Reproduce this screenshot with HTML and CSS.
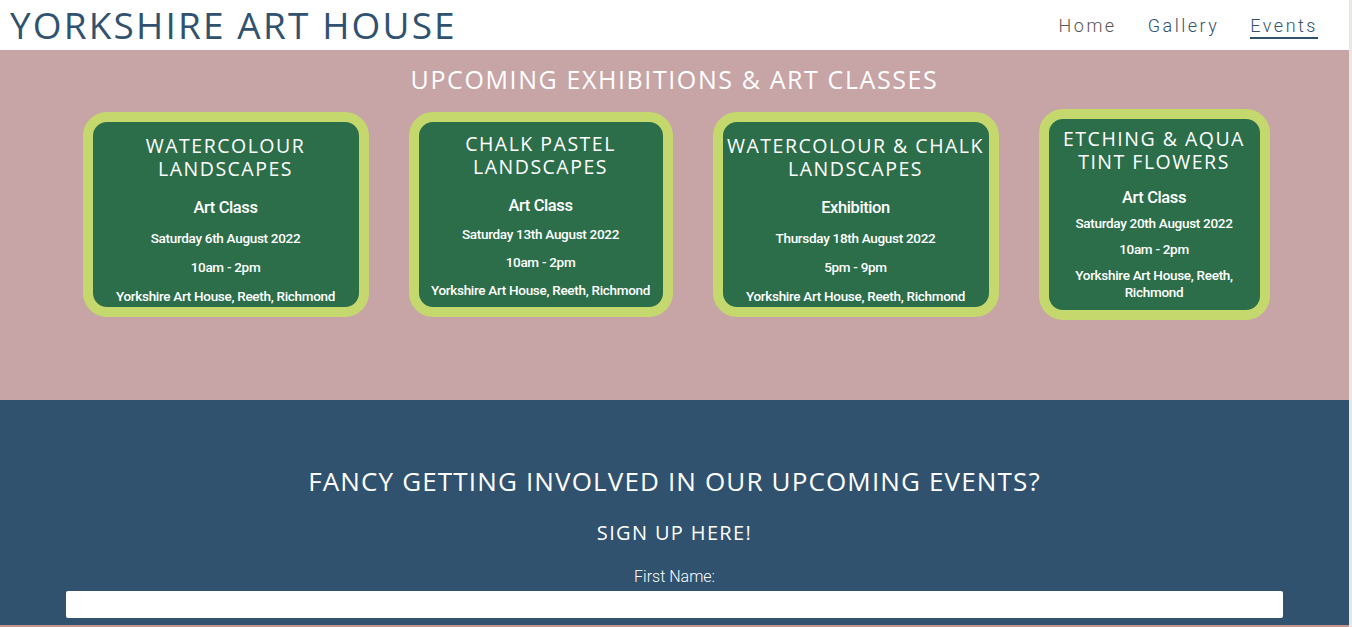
FILE: index.html
```html
<!DOCTYPE html>
<html lang="en">
<head>
<meta charset="utf-8">
<title>Events | Yorkshire Art House</title>
<link rel="stylesheet" href="styles.css">
</head>
<body>
<div class="page">
  <header class="site-header">
    <h1 class="logo">YORKSHIRE ART HOUSE</h1>
    <nav class="nav">
      <a class="nav-link nav-home" href="#">Home</a>
      <a class="nav-link" href="#">Gallery</a>
      <a class="nav-link active" href="#">Events</a>
    </nav>
  </header>

  <section class="events">
    <h2 class="events-title">UPCOMING EXHIBITIONS &amp; ART CLASSES</h2>
    <div class="cards">
      <article class="card card-wide">
        <h3 class="card-title">WATERCOLOUR<br>LANDSCAPES</h3>
        <p class="card-type">Art Class</p>
        <p>Saturday 6th August 2022</p>
        <p>10am - 2pm</p>
        <p>Yorkshire Art House, Reeth, Richmond</p>
      </article>
      <article class="card card-mid">
        <h3 class="card-title">CHALK PASTEL<br>LANDSCAPES</h3>
        <p class="card-type">Art Class</p>
        <p>Saturday 13th August 2022</p>
        <p>10am - 2pm</p>
        <p>Yorkshire Art House, Reeth, Richmond</p>
      </article>
      <article class="card card-wide">
        <h3 class="card-title">WATERCOLOUR &amp; CHALK<br>LANDSCAPES</h3>
        <p class="card-type">Exhibition</p>
        <p>Thursday 18th August 2022</p>
        <p>5pm - 9pm</p>
        <p>Yorkshire Art House, Reeth, Richmond</p>
      </article>
      <article class="card card-narrow">
        <h3 class="card-title">ETCHING &amp; AQUA<br>TINT FLOWERS</h3>
        <p class="card-type">Art Class</p>
        <p>Saturday 20th August 2022</p>
        <p>10am - 2pm</p>
        <p>Yorkshire Art House, Reeth, Richmond</p>
      </article>
    </div>
  </section>

  <section class="signup">
    <h2 class="signup-title">FANCY GETTING INVOLVED IN OUR UPCOMING EVENTS?</h2>
    <h3 class="signup-sub">SIGN UP HERE!</h3>
    <form class="signup-form">
      <label class="field-label" for="fname">First Name:</label>
      <input class="field-input" id="fname" type="text">
    </form>
  </section>
  <div class="next-strip"></div>
</div>
</body>
</html>
```
FILE: styles.css
```css
html {
  background: #e9e6e6;
}

body {
  margin: 0;
  font-family: Roboto, "Liberation Sans", sans-serif;
  overflow: hidden;
}

.page {
  margin-right: 3px;
  background: #ffffff;
}

/* Header */
.site-header {
  height: 50px;
  display: flex;
  align-items: center;
  justify-content: space-between;
  padding: 0 31px 0 10px;
  background: #ffffff;
}

.logo {
  margin: 0;
  font-family: "Open Sans", "Liberation Sans", sans-serif;
  font-weight: 400;
  font-size: 37px;
  letter-spacing: 2.15px;
  color: #30526f;
  line-height: 50px;
}

.nav {
  display: flex;
  gap: 31px;
  padding-top: 3px;
}

.nav-link {
  font-family: Roboto, sans-serif;
  font-weight: 300;
  font-size: 18px;
  letter-spacing: 2.5px;
  color: #30526f;
  text-decoration: none;
  padding-bottom: 1px;
}

.nav-home {
  color: #5a524b;
}

.nav-link.active {
  border-bottom: 2px solid #30526f;
}

/* Events section */
.events {
  height: 350px;
  box-sizing: border-box;
  background: #c7a4a6;
  padding-top: 14px;
}

.events-title {
  margin: 0;
  text-align: center;
  font-family: "Open Sans", "Liberation Sans", sans-serif;
  font-weight: 400;
  font-size: 25px;
  line-height: 30px;
  letter-spacing: 1.6px;
  color: #ffffff;
}

.cards {
  display: flex;
  justify-content: center;
  align-items: center;
  gap: 40px;
  margin-top: 15px;
  padding-left: 3px;
}

.card {
  box-sizing: border-box;
  height: 205px;
  border: 10px solid #c5d86d;
  border-radius: 24px;
  background: #2c6e4a;
  color: #ffffff;
  text-align: center;
  overflow: hidden;
  padding: 12px 2px 0;
}

.card-wide { width: 286px; }
.card-mid { width: 264px; padding-top: 10px; }
.card-narrow { width: 231px; height: 211px; padding-top: 8px; }

.card-title {
  margin: 0 0 18px;
  font-family: "Open Sans", "Liberation Sans", sans-serif;
  font-weight: 400;
  font-size: 19.5px;
  line-height: 23px;
  letter-spacing: 1.5px;
  white-space: nowrap;
}

.card p {
  margin: 0 0 12px;
  font-size: 13.5px;
  font-weight: 500;
  line-height: 17px;
  letter-spacing: -0.3px;
}

.card p.card-type {
  font-size: 16.5px;
  line-height: 20px;
  margin-bottom: 12px;
  letter-spacing: -0.4px;
}

.card-mid p { margin-bottom: 11px; }
.card-mid p.card-type { margin-bottom: 10px; }

.card-narrow .card-title { margin-bottom: 15px; }
.card-narrow p { margin-bottom: 9px; }
.card-narrow p.card-type { margin-bottom: 7px; }

/* Signup */
.signup {
  background: #30526f;
  color: #ffffff;
  text-align: center;
  padding-top: 64px;
  height: 225px;
  box-sizing: border-box;
}

.signup-title {
  margin: 0;
  font-family: "Open Sans", "Liberation Sans", sans-serif;
  font-weight: 400;
  font-size: 26px;
  line-height: 34px;
  letter-spacing: 1.15px;
}

.signup-sub {
  margin: 22px 0 0;
  font-family: "Open Sans", "Liberation Sans", sans-serif;
  font-weight: 400;
  font-size: 20px;
  line-height: 26px;
  letter-spacing: 1.35px;
}

.signup-form {
  width: 1217px;
  margin: 21px auto 0;
  display: flex;
  flex-direction: column;
  align-items: center;
}

.field-label {
  font-size: 16px;
  font-weight: 300;
  line-height: 19px;
  margin-bottom: 5px;
}

.field-input {
  width: 100%;
  box-sizing: border-box;
  height: 27px;
  border: none;
  border-radius: 2px;
  background: #ffffff;
}

.next-strip {
  height: 10px;
  background: #c8948f;
}
```
